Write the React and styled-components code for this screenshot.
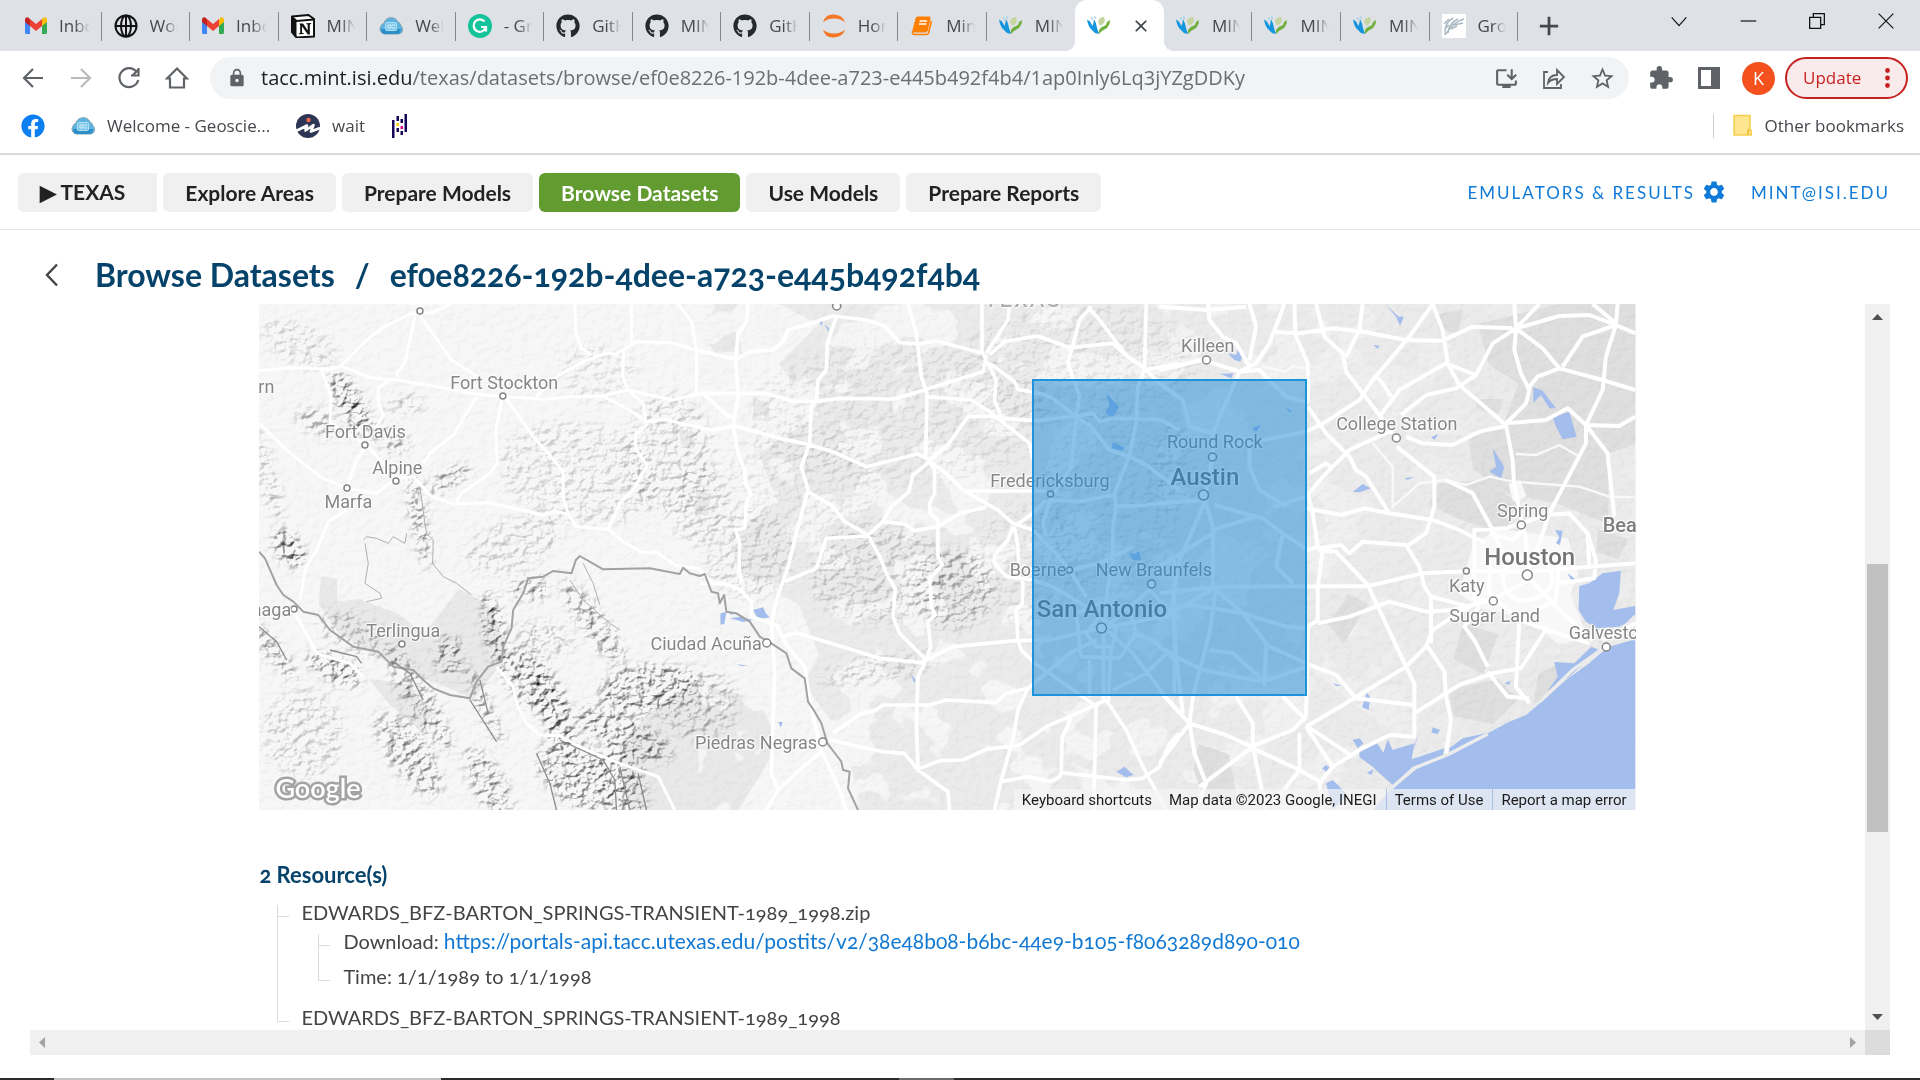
import React from "react";
import styled, { createGlobalStyle, css } from "styled-components";
import { FaFacebook, FaGithub } from "react-icons/fa";
import {
  MdClose,
  MdExtension,
  MdLock,
  MdOutlineInstallDesktop,
  MdSettings,
  MdStarBorder,
} from "react-icons/md";

const uiFont = '"Open Sans", "Noto Sans", sans-serif';
const appFont = 'Lato, "Open Sans", sans-serif';
const mapFont = 'Roboto, "Liberation Sans", sans-serif';

const GlobalStyle = createGlobalStyle`
  *, *::before, *::after { box-sizing: border-box; }
  body { margin: 0; background: #fff; overflow: hidden; }
  button { border: 0; background: none; padding: 0; margin: 0; font: inherit; color: inherit; cursor: pointer; }
  a { text-decoration: none; color: inherit; }
  ul { list-style: none; margin: 0; padding: 0; }
  svg { display: block; flex: none; }
`;

const Screen = styled.div`
  display: flex;
  flex-direction: column;
  height: 100vh;
`;

/* ---------- browser frame ---------- */

const TabStrip = styled.div`
  display: flex;
  height: 51px;
  padding-left: 13px;
  background: #dee1e6;
  font: 17px/24px ${uiFont};
  color: #45484d;
`;

const Tabs = styled.div`
  display: flex;
  flex: 1;
  min-width: 0;
`;

const Tab = styled.button`
  position: relative;
  display: flex;
  align-items: center;
  gap: 12px;
  flex: 1 1 0;
  min-width: 0;
  padding: 0 12px;
  text-align: left;
  ${(p) =>
    p.$line &&
    css`
      &::after {
        content: "";
        position: absolute;
        right: 0;
        top: 12px;
        width: 1px;
        height: 29px;
        background: #85888d;
      }
    `}
  ${(p) =>
    p.$active &&
    css`
      background: #fff;
      border-radius: 12px 12px 0 0;
      gap: 20px;
      &::before, &::after {
        content: "";
        position: absolute;
        bottom: 0;
        width: 10px;
        height: 10px;
      }
      &::before { left: -10px; background: radial-gradient(circle at 0 0, transparent 10px, #fff 10px); }
      &::after { right: -10px; background: radial-gradient(circle at 100% 0, transparent 10px, #fff 10px); }
    `}
`;

const TabLabel = styled.span`
  flex: 1;
  min-width: 0;
  overflow: hidden;
  white-space: nowrap;
  mask-image: linear-gradient(90deg, #000 50%, transparent);
`;

const NewTab = styled.button`
  display: grid;
  place-items: center;
  width: 62px;
`;

const WindowControls = styled.div`
  display: flex;
  height: 42px;
  margin-left: 64px;
`;

const WindowButton = styled.button`
  display: grid;
  place-items: center;
  width: 69px;
  color: #111;
`;

const Toolbar = styled.div`
  display: flex;
  align-items: center;
  height: 54px;
  padding: 0 12px 0 9px;
  color: #5f6368;
`;

const IconButton = styled.button`
  display: grid;
  place-items: center;
  width: 48px;
  height: 42px;
  color: ${(p) => (p.$dim ? "#b9bbbe" : "#5f6368")};
`;

const Omnibox = styled.div`
  display: flex;
  align-items: center;
  flex: 1;
  min-width: 0;
  height: 42px;
  margin-left: 9px;
  margin-right: 8px;
  padding-left: 17px;
  padding-right: 3px;
  border-radius: 21px;
  background: #f1f3f4;
`;

const Address = styled.div`
  flex: 1;
  min-width: 0;
  margin-left: 14px;
  overflow: hidden;
  white-space: nowrap;
  font: 20px/28px ${uiFont};
  color: #6b6e72;
  b { font-weight: 400; color: #202124; }
`;

const Avatar = styled.button`
  width: 33px;
  height: 33px;
  margin: 0 10px 0 9px;
  border-radius: 50%;
  background: #f4511e;
  color: #fff;
  font: 18px/33px ${uiFont};
`;

const UpdateButton = styled.button`
  display: flex;
  align-items: center;
  justify-content: space-between;
  width: 123px;
  height: 42px;
  padding: 0 16px;
  border: 2px solid #c5221f;
  border-radius: 21px;
  background: #f9ebeb;
  color: #c5221f;
  font: 17px/24px ${uiFont};
`;

const Bookmarks = styled.nav`
  display: flex;
  align-items: center;
  height: 50px;
  padding: 0 16px 6px 21px;
  border-bottom: 2px solid #dadada;
  font: 17px/24px ${uiFont};
  color: #45484d;
`;

const Bookmark = styled.a`
  display: flex;
  align-items: center;
  gap: 12px;
  margin-right: 26px;
`;

const OtherBookmarks = styled(Bookmark)`
  margin: 0 0 0 auto;
  padding-left: 19px;
  border-left: 1px solid #cfcfcf;
`;

/* ---------- MINT application ---------- */

const AppHeader = styled.header`
  display: flex;
  align-items: center;
  justify-content: space-between;
  height: 75px;
  padding: 0 30px 0 18px;
  border-bottom: 1px solid #e6e6e6;
  font-family: ${appFont};
`;

const NavList = styled.nav`
  display: flex;
  gap: 6px;
`;

const NavButton = styled.button`
  height: 39px;
  padding: 0 22px;
  border-radius: ${(p) => (p.$first ? "6px 0 0 6px" : "6px")};
  background: ${(p) => (p.$active ? "#629b30" : "#f0f0f0")};
  color: ${(p) => (p.$active ? "#fff" : "#222")};
  font-size: 21px;
  font-weight: 700;
  ${(p) => p.$first && "padding-right: 32px;"}
`;

const Account = styled.div`
  display: flex;
  align-items: center;
  gap: 24px;
  color: #0f7ad8;
  font-size: 17px;
  letter-spacing: 2px;
`;

const AccountLink = styled.a`
  display: flex;
  align-items: center;
  gap: 6px;
`;

const TitleRow = styled.div`
  display: flex;
  align-items: center;
  height: 74px;
  padding: 16px 30px 0 40px;
  font-family: ${appFont};
`;

const Title = styled.h1`
  display: flex;
  gap: 20px;
  margin: 0 0 0 31px;
  color: #06436b;
  font-size: 32px;
  line-height: 40px;
  font-weight: 700;
  font-variant-numeric: oldstyle-nums;
`;

const ScrollFrame = styled.main`
  display: grid;
  grid-template-columns: minmax(0, 1fr) 25px;
  grid-template-rows: minmax(0, 1fr) 25px;
  flex: 1;
  min-height: 0;
  margin: 0 30px 23px;
`;

const Viewport = styled.div`
  overflow: hidden;
`;

const Content = styled.div`
  width: 75%;
  margin: 0 auto;
  font: 20px/24px ${appFont};
  font-variant-numeric: oldstyle-nums;
  color: #444;
`;

const VScroll = styled.div`
  display: flex;
  flex-direction: column;
  align-items: center;
  background: #f0f0f0;
  padding: 10px 0;
`;

const VTrack = styled.div`
  flex: 1;
  width: 21px;
  display: grid;
  grid-template-rows: 244fr 268fr 182fr;
`;

const VThumb = styled.div`
  grid-row: 2;
  background: #c1c1c1;
`;

const HScroll = styled.div`
  display: flex;
  align-items: center;
  justify-content: space-between;
  padding: 0 9px;
  background: #f0f0f0;
`;

const Corner = styled.div`
  background: #dcdcdc;
`;

const arrowShape = {
  up: "polygon(50% 0, 100% 100%, 0 100%)",
  down: "polygon(0 0, 100% 0, 50% 100%)",
  left: "polygon(100% 0, 100% 100%, 0 50%)",
  right: "polygon(0 0, 100% 50%, 0 100%)",
};

const Arrow = styled.button`
  width: ${(p) => (p.$dir === "up" || p.$dir === "down" ? 11 : 6)}px;
  height: ${(p) => (p.$dir === "up" || p.$dir === "down" ? 6 : 11)}px;
  background: ${(p) => (p.$dir === "up" || p.$dir === "down" ? "#505050" : "#a3a3a3")};
  clip-path: ${(p) => arrowShape[p.$dir]};
`;

const MapBox = styled.section`
  position: relative;
  height: 506px;
  overflow: hidden;
  background: #f6f6f6;
  font-family: ${mapFont};
  font-variant-numeric: normal;
`;

const MapArt = styled.svg`
  width: 100%;
  height: 100%;
`;

const placeSize = { city: 24, town: 20, state: 22 };
const placeColor = { city: "#757575", town: "#7d7d7d", state: "#b0b0b0" };

const Place = styled.span`
  position: absolute;
  left: ${(p) => (p.$x / 1377) * 100}%;
  top: ${(p) => p.$y}px;
  transform: translate(-50%, -50%);
  white-space: nowrap;
  color: ${(p) => placeColor[p.$size] || "#868686"};
  font-size: ${(p) => placeSize[p.$size] || 18}px;
  font-weight: ${(p) => (p.$size ? 500 : 400)};
  line-height: 24px;
  letter-spacing: ${(p) => (p.$size === "state" ? "2px" : "normal")};
  text-shadow: 0 0 3px #fff, 0 0 3px #fff, 1px 1px 1px #fff, -1px -1px 1px #fff;
`;

const Extent = styled.div`
  position: absolute;
  left: ${(773 / 1377) * 100}%;
  top: 75px;
  width: ${(275 / 1377) * 100}%;
  height: 317px;
  border: 2px solid #1b94d9;
  background: rgba(26, 135, 214, 0.5);
`;

const Logo = styled.span`
  position: absolute;
  left: 16px;
  bottom: 5px;
  color: #fff;
  font: 600 27px/34px ${appFont};
  -webkit-text-stroke: 5px #a3a3a3;
  paint-order: stroke fill;
`;

const MapCredits = styled.div`
  position: absolute;
  right: 0;
  bottom: 0;
  display: flex;
  height: 21px;
  font-size: 15px;
  line-height: 22px;
  color: #1c1c1c;
  background: rgba(245, 245, 245, 0.7);
  white-space: nowrap;
  > * { padding: 0 9px 0 8px; }
  > a { border-left: 1px solid #a9bfe8; }
`;

const ResourceHeading = styled.h2`
  margin: 53px 0 13px;
  color: #06436b;
  font-size: 22px;
  line-height: 24px;
  font-weight: 700;
`;

const Tree = styled.ul`
  margin-left: ${(p) => (p.$nested ? 17 : 18)}px;
`;

const Leaf = styled.li`
  position: relative;
  padding: ${(p) => (p.$tight ? "0 0 11px 25px" : "0 0 6px 24px")};
  &::before {
    content: "";
    position: absolute;
    left: 0;
    top: 5px;
    width: 12px;
    height: 12px;
    border-bottom: 1px solid #dcdcdc;
  }
  &::after {
    content: "";
    position: absolute;
    left: 0;
    top: 5px;
    height: ${(p) => (p.$last ? "12px" : "100%")};
    border-left: 1px solid #dcdcdc;
  }
`;

const LeafLine = styled.div`
  margin-bottom: 5px;
  white-space: nowrap;
`;

const ResourceLink = styled.a`
  color: #1279d3;
  font-size: 21px;
`;

const Taskbar = styled.div`
  display: flex;
  height: 2px;
  background: #2c2a2b;
`;

const TaskSlot = styled.div`
  width: ${(p) => p.$w}px;
  background: ${(p) => p.$c || "transparent"};
`;

/* ---------- icons ---------- */

const Gmail = () => (
  <svg width="22" height="18" viewBox="0 0 22 18">
    <path d="M0 3v12.500q0 1.500 1.500 1.500H5V6z" fill="#4285f4" />
    <path d="M17 6v11h3.500q1.500 0 1.500-1.500V3z" fill="#34a853" />
    <path d="M17 2.500V9l5-4V2.800C22 .4 19.500-.3 17.900 1z" fill="#fbbc04" />
    <path d="M5 9V2l6 5 6-5v7l-6 5z" fill="#ea4335" />
    <path d="M0 2.800V5l5 4V2.500L4 1C2.500-.3 0 .4 0 2.800z" fill="#c5221f" />
  </svg>
);

const Globe = () => (
  <svg width="24" height="24" viewBox="0 0 24 24" fill="none" stroke="#111" strokeWidth="2">
    <circle cx="12" cy="12" r="10.500" />
    <ellipse cx="12" cy="12" rx="5" ry="10.500" />
    <path d="M2 12h20M12 2v20" />
  </svg>
);

const Notion = () => (
  <svg width="24" height="24" viewBox="0 0 24 24">
    <path d="M1 3l4 4v16l-4-5z" fill="#111" />
    <path d="M1 2.500L17.500 1 23 5v17.500L5.500 23.500 1 18z" fill="#fff" stroke="#111" strokeWidth="2" strokeLinejoin="round" />
    <path d="M1 2.500l4.500 4v17L1 18z" fill="#111" />
    <path d="M1 3l4.500 4L23 5.500" fill="none" stroke="#111" strokeWidth="2" />
    <path d="M8.500 9.500h3.600l4.600 7v-6l-1.500-.4V9.200l5-.3v.9l-1.400.6v10.200h-2l-5.800-8.300v6.400l1.700.5v.8l-5 .2v-.8l1.500-.5v-7.700z" fill="#111" />
  </svg>
);

const Cloud = () => (
  <svg width="24" height="22" viewBox="0 0 24 22">
    <path d="M6 19a5 5 0 01-4-8 5 5 0 013-3 7.500 7.500 0 0114-1 5 5 0 013 4 4.500 4.500 0 01-3 8z" fill="#5db3e0" stroke="#84a4b6" />
    <path d="M2 14h20q0 5-4 5H6q-4 0-4-5" fill="#2d8fc8" />
    <rect x="6.500" y="7.500" width="11" height="8" rx="1" fill="#7cc6ea" stroke="#b5e0f4" />
    <path d="M9 10h3v3H9zM13 10h3M13 13h3" fill="none" stroke="#d6f1fc" />
  </svg>
);

const Grammarly = () => (
  <svg width="24" height="24" viewBox="0 0 24 24">
    <circle cx="12" cy="12" r="12" fill="#15c39a" />
    <path d="M16.500 7.500A6.200 6.200 0 1017.500 14M13 13h5v4.500" fill="none" stroke="#fff" strokeWidth="2.200" />
  </svg>
);

const Jupyter = () => (
  <svg width="24" height="24" viewBox="0 0 24 24" fill="#f37726">
    <path d="M1 8.500Q3 0 12 .5t11 8Q19 4.500 12 4.500T1 8.500z" />
    <path d="M1 15.500Q3 24 12 23.500t11-8Q19 19.500 12 19.500T1 15.500z" />
  </svg>
);

const Book = () => (
  <svg width="24" height="24" viewBox="0 0 24 24">
    <path d="M5.500 4.500q.5-2 2.500-2h11q2 0 1.600 2l-2.800 12q-.4 2-2.400 2H4.500q-2.400 0-2-2.500z" fill="#ff7f00" />
    <path d="M9.500 7h7.500M8.800 10h7.500" stroke="#fff" strokeWidth="1.500" />
    <path d="M2.500 17q-.5 3.500 2 3.500h12q1.500 0 2-1.500l3-12" stroke="#ff7f00" strokeWidth="1.600" fill="none" />
  </svg>
);

const Mint = () => (
  <svg width="24" height="24" viewBox="0 0 24 24">
    <path d="M0 5.500l3 2 2.500 4.500 1-3.500L7 5l2 4.500L10 14l2 6-4-1-5-5-2-4z" fill="#1595dd" />
    <path d="M4 4l2 1M7 3l2 1" stroke="#9fd3f0" strokeWidth="1.500" />
    <path d="M11 8q1-5 6-5 2 4-1 7-2 2-3 1.500z" fill="#c5d6a0" />
    <path d="M12 20q-1-5 3-7l4-2 1-3 3-2-.5 4L20 14l-5 3z" fill="#6fb03c" />
  </svg>
);

const Grove = () => (
  <svg width="24" height="24" viewBox="0 0 24 24">
    <path d="M0 0h24v24H0z" fill="#fff" />
    <g fill="none" stroke="#a9b8c1" strokeWidth="1.500">
      <path d="M3 21Q2 9 11 4" />
      <path d="M6 19Q7 9 16 5" />
      <path d="M4 20Q11 8 22 5" />
      <path d="M2 10l5-5M4 14l3-3M12 11l9-2M9 15l6-3" />
    </g>
  </svg>
);

const Wait = () => (
  <svg width="24" height="24" viewBox="0 0 24 24">
    <circle cx="12" cy="12" r="12" fill="#2e3656" />
    <path d="M0 17l11-5.500-1.500 5L17.500 11l-2.500 6.500 9-3.500" fill="none" stroke="#fff" strokeWidth="2.600" strokeLinejoin="round" />
    <circle cx="12.500" cy="6" r="2.200" fill="#f26a4b" />
  </svg>
);

const Pandas = () => (
  <svg width="17" height="24" viewBox="0 0 17 24" fill="#150458">
    <path d="M1 6h2.500v18H1zM13.500 0H16v18h-2.500zM5.500 2H8v5H5.500zM5.500 14H8v4H5.500zM9.500 5H12v4H9.500zM9.500 17H12v4H9.500z" />
    <path d="M5.500 9H8v3H5.500z" fill="#ffca00" />
    <path d="M9.500 12H12v3H9.500z" fill="#e70488" />
  </svg>
);

const Folder = () => (
  <svg width="19" height="24" viewBox="0 0 19 24">
    <path d="M1 1.500h16V16q1.500 0 1.500 2v3H1z" fill="#ffe58f" stroke="#f5cf4c" strokeWidth="1.500" />
    <path d="M15 21v-4q0-1.500 1.500-1.500" fill="none" stroke="#e9b92c" strokeWidth="1.500" />
  </svg>
);

const Stroke = ({ d, size = 24, width = 2, join = "miter" }) => (
  <svg width={size} height={size} viewBox="0 0 24 24" fill="none" stroke="currentColor" strokeWidth={width} strokeLinejoin={join}>
    <path d={d} />
  </svg>
);

/* ---------- map drawing ---------- */

const roadsWest =
  "M27 212L120 203L240 207L275 198L360 233L440 240L560 260L680 282L760 290L890 298L960 290L1060 288L1130 325L1190 365L1250 358L1300 372L1390 390L1440 380" +
  "M275 195L350 120L400 82L480 42L550 38L600 12M495 50L465 190L443 215L443 232M512 50L605 180L680 228" +
  "M27 370L115 455L210 530L290 565L380 580L440 535L490 530L545 590L610 612L720 608L880 645L915 633L955 643L980 680L1075 688L1120 725L1175 757L1220 757L1280 797L1345 805L1390 850L1440 852" +
  "M215 210L243 290L240 370L345 430L440 535M345 440L315 490L293 560M290 630L235 665L205 740L165 810L150 900" +
  "M680 290L610 405L540 460L520 490M757 290L738 390L742 490L720 520L635 580L620 605M765 290L850 410L895 460L940 515L940 595L955 640" +
  "M975 12L978 100L995 145L1025 165M860 290L920 230L1000 185L1065 160L1100 162L1160 125L1265 128L1340 150L1440 175" +
  "M1145 12L1145 130M1122 150L1118 230L1135 270L1180 310L1190 375L1155 405L1160 450L1192 495L1150 570L1110 610L1075 688" +
  "M1060 288L1135 270L1270 300L1345 282L1440 280M1285 12L1325 65L1340 150L1340 280M1360 282L1440 355M415 243L385 265L385 310L400 345L380 380" +
  "M130 930L200 1060L300 1090L340 1130M740 1100L790 1160L800 1210L830 1270L870 1305L930 1308L1000 1345L1110 1390L1225 1430L1260 1500L1275 1530";

const roadsMiddle =
  "M145 12L140 65L115 100L108 180L115 290L100 380L115 460L135 510L137 550L153 580L140 605L135 685L108 690L120 730L118 800L125 850" +
  "M0 152L108 178L150 155L220 150L250 125L265 90L320 75L400 48L500 60L555 78L600 128L655 132L710 123L850 160" +
  "M410 50L383 130L380 210L355 240L350 300L335 320L330 430L305 500L325 570L290 700L265 800L230 900L215 970L225 1120L215 1420L235 1470L200 1530" +
  "M0 280L200 280L275 303L345 305L420 295L585 297L680 268L850 215L860 165" +
  "M0 385L40 390L105 378L240 415L320 432L400 455L500 500L580 480L655 462L690 480L745 435L805 350L870 348L900 355L1010 362L1130 348L1180 340L1200 365L1240 355L1380 358L1440 390" +
  "M10 280L75 340L100 352M625 12L650 100L665 230L682 280L678 470L705 510L705 580L690 610L692 640L715 660L715 770L728 795L690 835L695 920L707 945L685 965L693 1040L680 1080L655 1130L650 1270L655 1400" +
  "M680 290L815 300L870 335L990 430L1000 480M847 12L847 155L860 180M860 160L925 60L930 12M870 165L915 125L1015 108L1110 143L1240 130L1290 175L1335 205M862 185L890 240L885 300L905 355" +
  "M870 190L945 245L955 268L1020 280L1060 295L1130 350L1175 380L1230 450L1290 470L1340 495L1440 570" +
  "M325 575L400 620L435 665L505 705L540 770L565 830L587 865L580 950L600 1000L680 1080M505 705L550 665L615 672L645 692L715 680L780 640L860 622" +
  "M550 665L575 620L628 575L640 525L690 485L740 520L790 570L895 630L940 670L1000 690L1060 750L1110 810L1160 890M505 708L380 715L350 805L255 845M790 573L1040 573" +
  "M945 680L955 740L958 830L970 850L968 910L950 930L955 1020L965 1050L1000 1085L1185 1215M940 680L925 720L885 765L885 790L920 830L1000 840L1060 860L1160 920M1040 600L1000 640L950 675" +
  "M250 1010L290 998L540 1075L665 1088L690 1075L760 1040L950 1022L1050 1020L1180 990L1440 940" +
  "M0 850L70 850L120 868L155 905L155 950L230 975L260 1035L315 1100L330 1200L345 1270L365 1350L420 1470L440 1530M365 1355L300 1410L235 1470" +
  "M390 1320L550 1355L615 1360L655 1410L745 1475L750 1530M400 1300L485 1240L525 1232L550 1215L690 1215L740 1200L890 1208L920 1180L985 1165L1110 1060L1190 1020" +
  "M655 1408L720 1382L790 1380L860 1348L960 1335L1040 1280L1110 1250L1220 1200M985 1165L955 1230L940 1320L905 1440L885 1530" +
  "M905 1445L985 1430L1055 1445L1080 1430L1085 1418L1280 1440L1330 1435L1380 1400L1410 1330L1440 1300M1085 1415L1088 1310L1115 1255M1190 1215L1182 1530M1230 1215L1280 1290L1330 1400L1400 1530" +
  "M1390 1185L1440 1240M1175 20L1140 60L1105 190L1140 290L1130 350L1115 500L1055 590L1030 670L1040 710M1165 20L1200 60L1280 165L1335 205L1380 250L1440 290" +
  "M1340 12L1335 210L1315 260L1310 370L1290 465L1245 580L1250 620L1240 680L1240 790L1225 860L1210 980M1055 600L1140 605L1240 585M1250 620L1340 615L1440 605M1335 210L1440 190" +
  "M1110 810L1200 790L1300 740M1212 1000L1212 1200M1235 1040L1225 1215M1215 985L1300 1060L1390 1180M1210 990L1350 870L1440 960M1170 1080L1170 1190M1425 780L1425 1180" +
  "M1130 940L1145 1070L1260 1075L1310 1000L1290 930L1200 910ZM1160 1000L1190 1040L1240 1040L1250 980L1200 950ZM1300 1000L1360 1020L1425 1080M1240 1170L1340 1120L1400 1060";

const roadsEast =
  "M0 20L140 30L260 20M145 12L150 60L190 110L230 130L270 200M270 12L290 80L270 180M375 12L330 130L290 190L240 215L190 330L160 400L160 470" +
  "M0 210L130 180L240 215L300 210L380 290L440 305M405 12L408 105L445 190L445 310M340 95L420 100L520 85L610 95L740 120L850 122L940 80L1060 85" +
  "M470 12L495 110L550 160L560 215L660 345L700 400M610 12L600 90L560 170M820 12L850 90L865 190L900 255L1040 375L1060 480L1065 560" +
  "M820 12L750 110L640 240L600 300L500 365L440 395L205 440M650 230L670 250L695 290M660 350L720 270L860 190L950 225L1000 130L1070 85" +
  "M1070 85L1065 12M1070 85L1140 12M1070 85L1200 48L1290 45L1370 75M1070 85L1150 145L1200 205L1330 240L1428 270M1070 90L1065 150L1085 220L1110 270L1100 310L1040 370" +
  "M1370 75L1375 12M1370 75L1428 100M1300 12L1370 70M1370 75L1340 170L1330 270L1280 375L1280 430L1170 640M1370 75L1270 110L1210 200" +
  "M1280 375L1345 460L1365 650M1280 375L1380 378L1428 350M1040 370L1160 360L1225 325L1280 375M1110 260L1135 230L1200 205M725 345L800 285L890 265L950 225" +
  "M740 410L790 430L880 435L960 395L1040 378M712 440L825 530L825 620L800 700L740 740M445 320L500 400L570 470L590 510L620 530L690 640L820 660L900 690L980 730" +
  "M690 395L570 450L490 530L440 590L340 620M450 520L500 490L520 505M445 580L460 640L475 740L445 750L370 700L310 655L165 615M440 625L545 645L615 625L690 640" +
  "M475 745L545 735L570 760L610 725L740 735L780 800L795 860L815 890L815 1030M475 750L530 755L625 855L740 1100M490 750L475 860L475 960L445 980L440 1250" +
  "M0 880L170 860L625 858L790 820L950 812L1100 815L1428 790M475 970L570 950L690 905L800 935L880 930L1000 900M815 890L930 920M740 1100L800 1040L820 990L880 950L940 915" +
  "M440 1090L530 1125L590 1195L765 1215M440 1280L560 1210L740 1100L765 1150L765 1310L690 1305L600 1350L520 1400L480 1450L490 1530" +
  "M805 1040L855 1115L860 1190L875 1260L860 1360M765 1240L900 1155L1000 1120L1085 1105L1165 980M985 1100L945 1020L915 980L960 920M985 1115L1045 1190L1110 1195M1080 960L1070 1160L1110 1210" +
  "M990 700L1060 720L1090 690M1065 560L1100 720L1105 820M1170 640L1130 760L1105 820M945 900L945 690L1040 685L1160 645L1230 640L1285 700L1310 780L1305 835L1200 850" +
  "M860 540L940 580L1000 690L1040 780M1030 830Q1040 780 1105 770T1180 840Q1170 890 1105 900T1030 830ZM1105 830L1200 930L1300 1020M1105 840L1000 900L945 900M1080 960L1165 990L1290 1030M990 770L990 880L1080 960L1190 900L1200 770Z" +
  "M1285 700L1290 800M1428 970L1330 1020" +
  "M440 1250L400 1290L275 1340L200 1305L90 1270L0 1170M90 1270L105 1360L140 1450L110 1530M0 1390L90 1270L100 1190M230 1190L280 1270L280 1340L120 1460M280 1340L320 1530M280 1345L420 1410L490 1450M420 1410L420 1300M440 1280L520 1400M445 1280L580 1370M370 1190L440 1260M420 1410L350 1500" +
  "M0 1040L50 1070L130 1110L310 1145L440 1100M160 470L130 620L60 780L40 900L50 1070L70 1240M130 580L160 680L160 860L250 940L320 1030L315 1160M170 860L150 1000L100 1190M160 690L290 650" +
  "M0 250L70 300L90 380L160 400M270 410L270 500L300 570L380 620M370 700L350 800L400 850M250 940L380 980L440 985M0 930L100 915L250 940M150 1050L220 1060L310 1140M320 1035L440 1090M0 610L130 600M0 800L160 700M0 960L170 860";

const borderWest =
  "M27 755L45 775L80 855L100 885L130 905L160 935L205 945L240 990L310 1040L385 1055L430 1100L490 1110L520 1140L550 1165L600 1185L660 1195L680 1145L715 1100L755 1085L760 1040L785 985L790 930L820 880L835 835L880 830L910 813L965 820L978 780L990 768L1060 808L1200 805L1290 822L1300 803L1320 820L1350 828L1365 822L1385 875L1405 880L1410 910L1423 885L1430 935L1460 940L1500 965L1530 1010L1565 1030L1610 1060L1625 1105L1665 1135L1675 1205L1695 1235L1715 1270L1733 1330L1760 1365L1775 1385L1780 1410L1800 1415L1795 1465L1825 1530";

const waterMiddle =
  "M357 62L390 50L370 62L365 78ZM376 75L388 84L387 96ZM160 930L190 922L198 940L210 952L175 957ZM92 955L120 950L160 960L130 966ZM62 940L80 936L74 972L62 974ZM78 934L110 938L95 944Z" +
  "M1250 1415L1275 1400L1302 1425L1280 1432ZM633 1122L648 1140L644 1150ZM236 1266L249 1266L243 1283ZM1220 280L1258 320L1240 352L1217 340L1230 315ZM1240 425L1273 442L1270 452L1237 445ZM1288 758L1304 762L1320 752L1324 780L1300 780ZM110 1092L145 1097L125 1098Z";

const waterEast =
  "M1428 1018L1345 1042L1290 1090L1220 1140L1142 1210L1100 1245L1050 1265L985 1300L870 1360L770 1402L700 1460L640 1530L1428 1530Z" +
  "M1260 858L1290 850L1330 820L1385 812L1380 880L1362 930L1428 918L1428 955L1380 980L1310 985L1280 965L1258 930ZM1296 1040L1245 1090L1185 1086L1195 1130L1165 1172L1230 1130L1290 1075L1320 1050Z" +
  "M600 1350L650 1325L672 1358L685 1318L700 1350L765 1330L757 1378L855 1345L850 1370L760 1400L700 1455L660 1420L640 1400L600 1372ZM870 1345L910 1315L985 1298L930 1325L870 1357ZM760 1360L775 1302L770 1330Z" +
  "M1180 352L1230 335L1252 410L1210 418L1190 380ZM1122 262L1150 272L1190 325L1170 325L1145 285L1122 308ZM1000 445L1035 500L1025 535L990 515L1010 500ZM580 575L610 552L634 565L600 577Z" +
  "M580 1320L600 1315L612 1330L595 1345ZM820 1282L842 1290L835 1302L816 1298ZM1225 820L1252 840L1240 850ZM1187 690L1210 692L1202 735L1190 730L1200 712ZM680 15L718 50L733 50L722 78L710 50ZM205 160L230 165L235 148L250 165L243 185L225 180Z" +
  "M182 222L222 220L215 235ZM642 135L660 137L655 147ZM815 412L836 402L826 420ZM735 535L765 530L745 540ZM1325 165L1340 170L1355 182ZM622 1178L632 1190L628 1230L608 1222ZM520 1150L548 1158L530 1158ZM352 1302L372 1302L362 1315ZM500 1395L513 1405L500 1415L488 1405ZM622 1418L642 1408L636 1425ZM500 1450L520 1440L560 1480L550 1500L520 1530ZM1035 1150L1052 1142L1050 1154Z" +
  "M378 320L400 335L390 336ZM278 385L305 375L290 395Z";

const dots = [
  [161, 7, 3], [244, 92, 3], [106, 141, 3], [137, 177, 3], [88, 184, 3], [35, 305, 3], [143, 340, 3],
  [578, 2, 4], [508, 339, 4], [564, 438, 4], [792, 190, 3], [811, 266, 3], [893, 280, 4], [843, 324, 5],
  [948, 56, 4], [954, 153, 4], [945, 191, 5], [1138, 134, 4], [1263, 221, 4], [1208, 267, 3], [1269, 271, 5],
  [1235, 297, 4], [1348, 343, 4],
];

const places = [
  ["Pecos", 161, -6], ["TEXAS", 764, -4, "state"], ["Fort Stockton", 245, 79], ["rn", 7, 83], ["Fort Davis", 106, 128],
  ["Alpine", 138, 164], ["Marfa", 89, 198], ["naga", 12, 306], ["Terlingua", 144, 327], ["Ciudad Acuña", 447, 340],
  ["Piedras Negras", 497, 439], ["Fredericksburg", 791, 177], ["Boerne", 779, 266], ["New Braunfels", 895, 266],
  ["San Antonio", 843, 305, "city"], ["Killeen", 949, 42], ["Round Rock", 956, 138], ["Austin", 946, 173, "city"],
  ["College Station", 1138, 120], ["Spring", 1264, 207], ["Beaumont", 1390, 221, "town"], ["Houston", 1271, 253, "city"],
  ["Katy", 1208, 282], ["Sugar Land", 1236, 312], ["Galveston", 1350, 329],
];

/* cx, cy, rx, ry, rotation, strength of the hill shading */
const hills = [
  [92, 100, 12, 35, -30, 1], [60, 118, 25, 12, 20, 0.7], [130, 135, 22, 12, 30, 0.7], [145, 100, 20, 8, 0, 0.6],
  [30, 245, 12, 22, -35, 1], [8, 170, 8, 50, -15, 0.6], [160, 215, 8, 50, -10, 0.8], [190, 175, 25, 9, -30, 0.8],
  [95, 330, 40, 18, 25, 0.6], [190, 352, 14, 20, 0, 0.9], [235, 325, 10, 38, -10, 1], [12, 345, 8, 40, -40, 0.8],
  [75, 365, 30, 12, 25, 0.9], [160, 395, 14, 60, -30, 0.8], [270, 375, 22, 34, -35, 0.9], [295, 405, 14, 46, -20, 1],
  [335, 320, 12, 52, -35, 0.8], [390, 385, 50, 24, -5, 0.9], [365, 430, 52, 18, 25, 0.9], [440, 400, 40, 35, 0, 0.6],
  [225, 400, 7, 45, -25, 0.8], [320, 470, 45, 30, 35, 0.9], [365, 480, 22, 40, -10, 0.9], [150, 450, 20, 50, -35, 0.8],
  [45, 430, 40, 45, 0, 0.5], [270, 285, 20, 12, 0, 0.8], [230, 480, 16, 40, -30, 0.8], [285, 335, 30, 16, 10, 0.6],
  [255, 240, 50, 25, -20, 0.5], [320, 170, 80, 50, 10, 0.45], [410, 150, 45, 60, 0, 0.5], [440, 200, 30, 40, 0, 0.5],
  [40, 40, 40, 20, 25, 0.45], [340, 70, 40, 30, 0, 0.35], [490, 250, 45, 45, 0, 0.45], [620, 270, 70, 50, 0, 0.5],
  [695, 285, 40, 40, 0, 0.65], [540, 180, 80, 60, 0, 0.3], [770, 260, 60, 60, 0, 0.3], [850, 200, 70, 90, 0, 0.3],
  [915, 160, 20, 50, 0, 0.4], [640, 110, 150, 70, 0, 0.3], [820, 60, 120, 60, 0, 0.3], [620, 365, 60, 12, -10, 0.5],
];

const land = "M441 0L520 0L560 20L520 60L560 110L500 150L520 200L470 230L480 270L540 300L560 350L545 380L590 440L600 506L1377 506L1377 0Z";

const grayPatches =
  "M60 300L100 295L140 310L165 330L200 285L230 300L250 350L215 395L180 380L140 365L80 330ZM62 272L78 275L78 300L60 300ZM440 380L500 395L520 440L480 506L370 506L360 440L400 400ZM110 375L150 380L175 410L160 425L130 400ZM420 125L436 128L430 145L422 140ZM438 185L452 190L450 215L435 205ZM470 70L485 60L480 30L460 20L480 0L455 0L450 40ZM495 95L510 98L512 125L500 140L494 120ZM590 30L620 45L605 90L580 75ZM575 110L600 100L615 140L590 165Z";

const darkEast =
  "M1220 20L1300 0L1377 0L1377 140L1350 150L1350 220L1300 200L1250 190L1215 165L1210 135L1245 120L1260 80L1230 60ZM1180 10L1205 5L1200 30L1180 25ZM1215 95L1245 95L1240 110L1220 105ZM1180 180L1230 175L1260 200L1245 230L1200 215L1170 200ZM1205 320L1240 330L1225 370L1195 355ZM1190 385L1240 375L1260 395L1235 420L1195 412ZM1090 290L1110 300L1085 340L1070 320ZM1340 225L1370 235L1360 255L1338 248ZM940 440L970 450L980 500L945 495L935 465ZM1280 370L1300 360L1298 390L1275 400Z";

const MapDrawing = () => (
  <MapArt viewBox="0 0 1377 506" preserveAspectRatio="none" aria-hidden="true">
    <defs>
      <filter id="relief" x="0" y="0" width="100%" height="100%" colorInterpolationFilters="sRGB">
        <feTurbulence type="fractalNoise" baseFrequency="0.12 0.15" numOctaves="4" seed="8" result="n" />
        <feColorMatrix in="n" type="matrix" values="0 0 0 0 0  0 0 0 0 0  0 0 0 0 0  1 0 0 0 0" />
        <feDiffuseLighting surfaceScale="5" diffuseConstant="1.25" lightingColor="#fff">
          <feDistantLight azimuth="225" elevation="56" />
        </feDiffuseLighting>
      </filter>
      <filter id="fields" x="0" y="0" width="100%" height="100%" colorInterpolationFilters="sRGB">
        <feTurbulence type="fractalNoise" baseFrequency="0.019 0.022" numOctaves="3" seed="21" />
        <feColorMatrix type="matrix" values="0 0 0 0 0.965  0 0 0 0 0.965  0 0 0 0 0.965  30 0 0 0 -16.500" />
      </filter>
      <filter id="soft" x="-50%" y="-50%" width="200%" height="200%">
        <feGaussianBlur stdDeviation="5" />
      </filter>
      <linearGradient id="fade" x1="0" x2="1">
        <stop offset="0.300" stopColor="#fff" />
        <stop offset="0.550" stopColor="#fff" stopOpacity="0.700" />
        <stop offset="0.850" stopColor="#fff" stopOpacity="0.150" />
      </linearGradient>
      <mask id="hillMask">
        <rect width="1377" height="506" fill="#fff" opacity="0.030" />
        <g filter="url(#soft)" fill="#fff">
          {hills.map(([cx, cy, rx, ry, r, o], i) => (
            <ellipse key={i} cx={cx} cy={cy} rx={rx} ry={ry} opacity={o * o * 0.85} transform={`rotate(${r} ${cx} ${cy})`} />
          ))}
        </g>
      </mask>
      <mask id="fieldMask">
        <rect x="440" width="937" height="506" fill="url(#fade)" />
      </mask>
    </defs>
    <rect width="1377" height="506" fill="#f7f7f7" />
    <path d={land} fill="#ebebeb" />
    <path d={grayPatches} fill="#e9e9e9" />
    <g mask="url(#fieldMask)">
      <rect width="1377" height="506" filter="url(#fields)" />
    </g>
    <path d={darkEast} fill="#dfdfdf" />
    <g mask="url(#hillMask)" style={{ mixBlendMode: "multiply" }}>
      <rect width="1377" height="506" filter="url(#relief)" />
    </g>
    <path d="M1215 240L1240 225L1265 228L1310 235L1320 270L1312 290L1330 335L1300 340L1270 315L1225 305L1200 290ZM1250 180L1262 176L1268 192L1255 198Z" fill="#f8f8f8" />
    <g transform="translate(901 -4) scale(0.333333)">
      <path d={waterEast} fill="#a3bdec" />
      <path d="M1428 948L1345 1035L1240 1110L1142 1205M985 1302L870 1362L770 1402L695 1465" fill="none" stroke="#ececec" strokeWidth="10" />
      <path d="M310 200L380 215L400 198L440 205M640 430L700 500L700 620L780 550L860 540L920 555L990 530L1060 545L1260 560L1350 590L1428 592M1070 462L1130 465L1200 435L1260 470" fill="none" stroke="#f9f9f9" strokeWidth="7" />
      <path d={roadsEast} fill="none" stroke="#fff" strokeWidth="12" strokeLinejoin="round" />
    </g>
    <g transform="translate(441 -4) scale(0.333333)">
      <path d={waterMiddle} fill="#a3bdec" />
      <path d={roadsMiddle} fill="none" stroke="#fff" strokeWidth="11" strokeLinejoin="round" />
    </g>
    <g transform="translate(-9 -4) scale(0.333333)" fill="none" strokeLinejoin="round">
      <path d={roadsWest} stroke="#fff" strokeWidth="9" />
      <path d={borderWest} stroke="#a2a2a2" strokeWidth="6" />
      <path
        d="M340 720L350 710L380 715L415 730L430 710L465 730L470 700M510 560L525 670L530 700L550 720L548 790L580 830L620 850L665 885M345 730L355 790L345 850L390 880L395 895L350 905M960 840L1000 900L1080 970L1110 990M1000 790L1030 850L1050 915"
        stroke="#b0b0b0"
        strokeWidth="3"
      />
      <path
        d="M430 1085L480 1120L520 1200M690 1140L715 1240M660 1200L740 1325M860 1360L900 1450L920 1530M930 1320L1060 1380L1095 1440L1100 1530M1165 1420L1190 1530M1110 1400L1140 1530M27 980L80 1025L110 1080M240 1050L320 1070L335 1090"
        stroke="#8d8d8d"
        strokeWidth="4"
      />
    </g>
    <g fill="#fff" stroke="#858585" strokeWidth="1.500">
      {dots.map(([cx, cy, r], i) => (
        <circle key={i} cx={cx} cy={cy} r={r} />
      ))}
    </g>
  </MapArt>
);

/* ---------- data ---------- */

const tabs = [
  [Gmail, "Inbox"], [Globe, "World"], [Gmail, "Inbox"], [Notion, "MINT"], [Cloud, "Welcome"], [Grammarly, "- Grammarly"],
  [FaGithub, "GitHub"], [FaGithub, "MINT"], [FaGithub, "GitHub"], [Jupyter, "Home"], [Book, "Mint"], [Mint, "MINT"],
  [Mint, null], [Mint, "MINT"], [Mint, "MINT"], [Mint, "MINT"], [Grove, "Groundwater"],
];

const nav = ["Explore Areas", "Prepare Models", "Browse Datasets", "Use Models", "Prepare Reports"];

const BackButton = styled.button`
  display: grid;
  place-items: center;
  width: 24px;
  height: 32px;
  color: #444;
`;

export default function App() {
  return (
    <Screen>
      <GlobalStyle />
      <TabStrip>
        <Tabs>
          {tabs.map(([Icon, label], i) => (
            <Tab key={i} $active={!label} $line={label && i !== 11} aria-label={label || "MINT"}>
              <Icon size={24} color="#24292f" />
              {label ? <TabLabel>{label}</TabLabel> : <MdClose size={20} color="#3c4043" />}
            </Tab>
          ))}
        </Tabs>
        <NewTab aria-label="New tab">
          <Stroke d="M12 2v20M2 12h20" size={22} width={3} />
        </NewTab>
        <WindowControls>
          <WindowButton aria-label="Search tabs"><Stroke d="M4 8l8 9 8-9" size={22} width={1.3} /></WindowButton>
          <WindowButton aria-label="Minimize"><Stroke d="M4 12h17" size={22} width={1.3} /></WindowButton>
          <WindowButton aria-label="Restore"><Stroke d="M4 8h12v12H4zM8 8V4h12v12h-4" size={22} width={1.4} /></WindowButton>
          <WindowButton aria-label="Close"><Stroke d="M4 4l16 16M20 4L4 20" size={22} width={1.3} /></WindowButton>
        </WindowControls>
      </TabStrip>

      <Toolbar>
        <IconButton aria-label="Back"><Stroke d="M22 12H4M12 3l-9 9 9 9" width={2.2} /></IconButton>
        <IconButton aria-label="Forward" $dim><Stroke d="M2 12h18M12 3l9 9-9 9" width={2.2} /></IconButton>
        <IconButton aria-label="Reload"><Stroke d="M20 6.500A9.500 9.500 0 1021.200 14M21.500 2v7.500H14M21 4l-5 5" width={2.2} /></IconButton>
        <IconButton aria-label="Home"><Stroke d="M2 12.500L12 2.500l10 10h-3V21.500H5v-9z" width={2.2} /></IconButton>
        <Omnibox>
          <MdLock size={20} />
          <Address><b>tacc.mint.isi.edu</b>/texas/datasets/browse/ef0e8226-192b-4dee-a723-e445b492f4b4/1ap0Inly6Lq3jYZgDDKy</Address>
          <IconButton aria-label="Install"><MdOutlineInstallDesktop size={25} /></IconButton>
          <IconButton aria-label="Share"><Stroke d="M6 6H2v16h17v-4M6 17q1-8 9-8V4l7 7-7 7v-5q-6 0-9 4z" width={1.8} /></IconButton>
          <IconButton aria-label="Bookmark this page"><MdStarBorder size={27} /></IconButton>
        </Omnibox>
        <IconButton aria-label="Extensions"><MdExtension size={26} /></IconButton>
        <IconButton aria-label="Side panel">
          <svg width="22" height="22" viewBox="0 0 22 22"><path d="M0 0h22v22H0zM3 3v16h10V3z" fill="currentColor" fillRule="evenodd" /></svg>
        </IconButton>
        <Avatar>K</Avatar>
        <UpdateButton>
          Update
          <svg width="5" height="20" viewBox="0 0 5 20" fill="currentColor">
            <circle cx="2.500" cy="2.500" r="2.400" /><circle cx="2.500" cy="10" r="2.400" /><circle cx="2.500" cy="17.500" r="2.400" />
          </svg>
        </UpdateButton>
      </Toolbar>

      <Bookmarks>
        <Bookmark href="#facebook" aria-label="Facebook"><FaFacebook size={24} color="#0c7ff2" /></Bookmark>
        <Bookmark href="#welcome"><Cloud />Welcome - Geoscie...</Bookmark>
        <Bookmark href="#wait"><Wait />wait</Bookmark>
        <Bookmark href="#pandas" aria-label="pandas"><Pandas /></Bookmark>
        <OtherBookmarks href="#other"><Folder />Other bookmarks</OtherBookmarks>
      </Bookmarks>

      <AppHeader>
        <NavList>
          <NavButton $first>▶ TEXAS</NavButton>
          {nav.map((label) => (
            <NavButton key={label} $active={label === "Browse Datasets"}>{label}</NavButton>
          ))}
        </NavList>
        <Account>
          <AccountLink href="#emulators">EMULATORS &amp; RESULTS <MdSettings size={26} /></AccountLink>
          <AccountLink href="#account">MINT@ISI.EDU</AccountLink>
        </Account>
      </AppHeader>

      <TitleRow>
        <BackButton aria-label="Back to datasets">
          <Stroke d="M17 1.500L7 12l10 10.500" width={2.4} />
        </BackButton>
        <Title><span>Browse Datasets</span><span>/</span><span>ef0e8226-192b-4dee-a723-e445b492f4b4</span></Title>
      </TitleRow>

      <ScrollFrame>
        <Viewport>
          <Content>
            <MapBox aria-label="Map">
              <MapDrawing />
              {places.map(([name, x, y, size]) => (
                <Place key={name} $x={x} $y={y} $size={size}>{name}</Place>
              ))}
              <Extent />
              <Logo>Google</Logo>
              <MapCredits>
                <button>Keyboard shortcuts</button>
                <span>Map data ©2023 Google, INEGI</span>
                <a href="#terms">Terms of Use</a>
                <a href="#report">Report a map error</a>
              </MapCredits>
            </MapBox>
            <ResourceHeading>2 Resource(s)</ResourceHeading>
            <Tree>
              <Leaf>
                <LeafLine>EDWARDS_BFZ-BARTON_SPRINGS-TRANSIENT-1989_1998.zip</LeafLine>
                <Tree $nested>
                  <Leaf $tight>
                    Download: <ResourceLink href="#download">https://portals-api.tacc.utexas.edu/postits/v2/38e48b08-b6bc-44e9-b105-f8063289d890-010</ResourceLink>
                  </Leaf>
                  <Leaf $tight $last>Time: 1/1/1989 to 1/1/1998</Leaf>
                </Tree>
              </Leaf>
              <Leaf $last><LeafLine>EDWARDS_BFZ-BARTON_SPRINGS-TRANSIENT-1989_1998</LeafLine></Leaf>
            </Tree>
          </Content>
        </Viewport>
        <VScroll>
          <Arrow $dir="up" aria-label="Scroll up" />
          <VTrack><VThumb /></VTrack>
          <Arrow $dir="down" aria-label="Scroll down" />
        </VScroll>
        <HScroll>
          <Arrow $dir="left" aria-label="Scroll left" />
          <Arrow $dir="right" aria-label="Scroll right" />
        </HScroll>
        <Corner />
      </ScrollFrame>

      <Taskbar>
        <TaskSlot $w={54} />
        <TaskSlot $w={387} $c="#c3c3c3" />
        <TaskSlot $w={458} />
        <TaskSlot $w={55} $c="#6b6a6b" />
      </Taskbar>
    </Screen>
  );
}
